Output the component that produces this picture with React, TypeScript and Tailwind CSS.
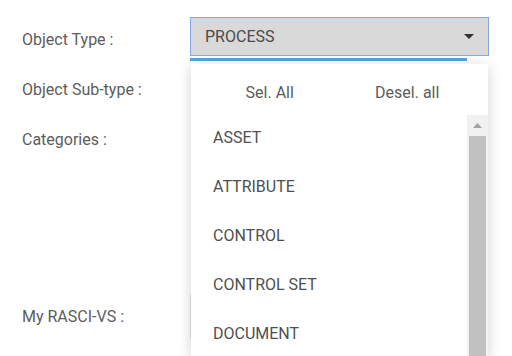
import React from 'react';

const items = ['ASSET', 'ATTRIBUTE', 'CONTROL', 'CONTROL SET', 'DOCUMENT'];

const App: React.FC = () => {
  return (
    <div className="relative w-[512px] h-[356px] overflow-hidden bg-white font-['Roboto',sans-serif] text-[16px] leading-[20px]">
      <div className="flex flex-col pl-[22px]">
        <div className="mt-[17px] flex">
          <div className="w-[168px] pt-[13px] text-[#5c5c5c]">Object Type :</div>
          <div className="flex h-[39px] w-[299px] items-center justify-between border border-[#7faaeb] bg-[#d9d9d9] pl-[14px] pr-[14px] text-[#4a4a4a]">
            <span>PROCESS</span>
            <svg width="10" height="5" viewBox="0 0 10 5">
              <path d="M0 0 L10 0 L5 5 Z" fill="#333" />
            </svg>
          </div>
        </div>
        <div className="ml-[168px] mt-[2px] h-[3px] w-[277px] bg-[#5aa3e0]" />

        <div className="mt-[19px] text-[#5c5c5c]">Object Sub-type :</div>
        <div className="mt-[30px] text-[#5c5c5c]">Categories :</div>

        <div className="mt-[145px] flex items-center">
          <div className="w-[168px] text-[#5c5c5c]">My RASCI-VS :</div>
          <div className="h-[44px] w-[298px] border border-[#e3e3e3]" />
        </div>
      </div>

      <div className="absolute left-[191px] top-[64px] flex h-[292px] w-[297px] flex-col rounded-t-[2px] bg-white shadow-[0_3px_14px_rgba(0,0,0,0.18)]">
        <div className="ml-[10px] mr-[12px] grid h-[51px] grid-cols-2 pt-[19px] text-[#5c5c5c]">
          <span className="text-center">Sel. All</span>
          <span className="text-center">Desel. all</span>
        </div>
        <div className="flex flex-1 overflow-hidden">
          <div className="flex-1">
            {items.map((it) => (
              <div key={it} className="h-[49px] pl-[22px] pt-[13px] text-[#4f4f4f]">
                {it}
              </div>
            ))}
          </div>
          <div className="flex w-[21px] flex-col bg-[#f1f1f1]">
            <div className="flex h-[21px] items-center justify-center">
              <svg width="9" height="5" viewBox="0 0 9 5">
                <path d="M0 5 L4.5 0 L9 5 Z" fill="#a3a3a3" />
              </svg>
            </div>
            <div className="mx-[2px] flex-1 bg-[#c1c1c1]" />
          </div>
        </div>
      </div>
    </div>
  );
};

export default App;
